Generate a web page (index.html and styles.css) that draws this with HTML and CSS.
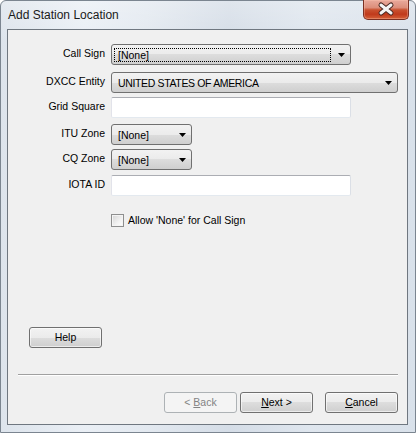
FILE: index.html
```html
<!DOCTYPE html>
<html>
<head>
<meta charset="utf-8">
<link rel="stylesheet" href="styles.css">
</head>
<body>
<div class="window">
  <div class="titlebar">
    <span class="title">Add Station Location</span>
    <div class="close">
      <svg width="46" height="20" viewBox="0 0 46 20">
        <path d="M18 6 L28 14 M28 6 L18 14" stroke="#4a2a24" stroke-width="5" stroke-linecap="round" fill="none"/>
        <path d="M18 6 L28 14 M28 6 L18 14" stroke="#f4f4f4" stroke-width="3" stroke-linecap="round" fill="none"/>
      </svg>
    </div>
  </div>
  <div class="client">
    <div class="form">
      <div class="row">
        <span class="lbl">Call Sign</span>
        <div class="combo w240">
          <span class="val focus">[None]</span>
          <svg class="arrow" width="7" height="4" viewBox="0 0 7 4"><polygon points="0,0 7,0 3.5,4" fill="#000"/></svg>
        </div>
      </div>
      <div class="row g7">
        <span class="lbl">DXCC Entity</span>
        <div class="combo w287">
          <span class="val caps">UNITED STATES OF AMERICA</span>
          <svg class="arrow" width="7" height="4" viewBox="0 0 7 4"><polygon points="0,0 7,0 3.5,4" fill="#000"/></svg>
        </div>
      </div>
      <div class="row g4">
        <span class="lbl">Grid Square</span>
        <div class="input w240"></div>
      </div>
      <div class="row g6">
        <span class="lbl">ITU Zone</span>
        <div class="combo w81">
          <span class="val">[None]</span>
          <svg class="arrow" width="7" height="4" viewBox="0 0 7 4"><polygon points="0,0 7,0 3.5,4" fill="#000"/></svg>
        </div>
      </div>
      <div class="row g4">
        <span class="lbl">CQ Zone</span>
        <div class="combo w81">
          <span class="val">[None]</span>
          <svg class="arrow" width="7" height="4" viewBox="0 0 7 4"><polygon points="0,0 7,0 3.5,4" fill="#000"/></svg>
        </div>
      </div>
      <div class="row g5">
        <span class="lbl">IOTA ID</span>
        <div class="input w240"></div>
      </div>
    </div>
    <div class="check-row">
      <span class="cb"></span>
      <span class="cb-text">Allow 'None' for Call Sign</span>
    </div>
    <div class="help-row">
      <div class="btn"><span>Help</span></div>
    </div>
    <div class="sep"></div>
    <div class="nav">
      <div class="btn disabled"><span>&lt; <u>B</u>ack</span></div>
      <div class="btn next"><span><u>N</u>ext &gt;</span></div>
      <div class="btn cancel"><span><u>C</u>ancel</span></div>
    </div>
  </div>
</div>
</body>
</html>
```

FILE: styles.css
```css
html, body {
  margin: 0;
  padding: 0;
}
body {
  width: 416px;
  height: 433px;
  overflow: hidden;
  font-family: "Liberation Sans", Arial, sans-serif;
  font-size: 10.5px;
  color: #000;
}
.window {
  width: 416px;
  height: 433px;
  box-sizing: border-box;
  display: flex;
  flex-direction: column;
  padding: 0 7px 7px 6px;
  border: 1px solid #7b8590;
  border-radius: 6px 6px 0 0;
  background:
    linear-gradient(to bottom, rgba(255,255,255,0.25), rgba(255,255,255,0) 40px),
    linear-gradient(to right, #dde4ec 0%, #eaeff5 20%, #e3e9f0 35%, #d5dde7 55%, #dfe6ee 75%, #d9e1ea 100%);
}
.titlebar {
  height: 28px;
  flex: 0 0 28px;
  display: flex;
  align-items: flex-start;
  margin-right: -1px;
}
.title {
  font-family: "Liberation Sans", Arial, sans-serif;
  font-size: 12px;
  color: #1a1a1a;
  padding-left: 1px;
  margin-top: 7px;
}
.close {
  margin-left: auto;
  margin-top: -1px;
  width: 46px;
  height: 20px;
  box-sizing: border-box;
  border: 1px solid #7a2f22;
  border-top: none;
  border-radius: 0 0 5px 5px;
  background: linear-gradient(to bottom, #e9aa9c 0%, #dc8e7b 40%, #c9512f 52%, #c03a1c 75%, #d56038 100%);
  box-shadow: inset 0 0 0 1px rgba(255,200,180,0.35);
  overflow: hidden;
}
.close svg {
  display: block;
  margin: -1px 0 0 -1px;
}
.client {
  flex: 1;
  border: 1px solid #6f7780;
  background: #f0f0f0;
  display: flex;
  flex-direction: column;
}
.form {
  padding-top: 14px;
  display: flex;
  flex-direction: column;
}
.row {
  display: flex;
  align-items: flex-start;
}
.g4 { margin-top: 4px; }
.g5 { margin-top: 5px; }
.g6 { margin-top: 6px; }
.g7 { margin-top: 7px; }
.lbl {
  width: 97px;
  flex: 0 0 97px;
  text-align: right;
  padding-top: 3px;
  margin-right: 6px;
  line-height: 13px;
}
.combo {
  height: 21px;
  box-sizing: border-box;
  border: 1px solid #707070;
  border-radius: 3px;
  background: linear-gradient(to bottom, #f2f2f2 0%, #ebebeb 50%, #dddddd 50%, #cfcfcf 100%);
  display: flex;
  align-items: center;
}
.val {
  flex: 1;
  min-width: 0;
  box-sizing: border-box;
  height: 14px;
  line-height: 12px;
  padding-left: 3px;
  margin: 1px 7px 0 2px;
  border: 1px solid transparent;
  white-space: nowrap;
  overflow: hidden;
}
.val.focus {
  border: 1px dotted #000;
}
.caps {
  letter-spacing: -0.35px;
}
.arrow {
  margin-right: 5px;
  flex: none;
}
.w240 { width: 240px; }
.w287 { width: 287px; }
.w81 { width: 81px; }
.input {
  height: 21px;
  box-sizing: border-box;
  background: #fff;
  border: 1px solid;
  border-color: #abadb3 #dbdfe6 #e3e9ef #e2e3ea;
  border-radius: 2px;
}
.check-row {
  margin-top: 18px;
  margin-left: 103px;
  display: flex;
  align-items: center;
  height: 13px;
}
.cb {
  width: 13px;
  height: 13px;
  box-sizing: border-box;
  border: 1px solid #8e8f8f;
  background: linear-gradient(135deg, #d4d4d4 0%, #f2f2f2 60%, #ffffff 100%);
  box-shadow: inset 0 0 0 1px #f4f4f4;
  flex: none;
}
.cb-text {
  margin-left: 4px;
  line-height: 13px;
}
.help-row {
  margin-top: 100px;
  padding-left: 21px;
  display: flex;
}
.btn {
  width: 73px;
  height: 21px;
  box-sizing: border-box;
  border: 1px solid #707070;
  border-radius: 3px;
  background: linear-gradient(to bottom, #f2f2f2 0%, #ebebeb 50%, #dddddd 50%, #cfcfcf 100%);
  box-shadow: inset 0 0 0 1px rgba(255,255,255,0.6);
  display: flex;
  align-items: center;
  justify-content: center;
  line-height: 13px;
}
.btn u {
  text-decoration: underline;
  text-underline-offset: 1px;
}
.btn.disabled {
  border-color: #adb2b5;
  background: #f4f4f4;
  color: #838383;
  box-shadow: none;
}
.sep {
  margin: 26px 9px 0 10px;
  height: 1px;
  background: #a0a0a0;
  box-shadow: 0 1px 0 #ffffff;
}
.nav {
  margin-top: 17px;
  display: flex;
  justify-content: flex-end;
  padding-right: 9px;
}
.next {
  margin-left: 3px;
}
.cancel {
  margin-left: 12px;
}
```
